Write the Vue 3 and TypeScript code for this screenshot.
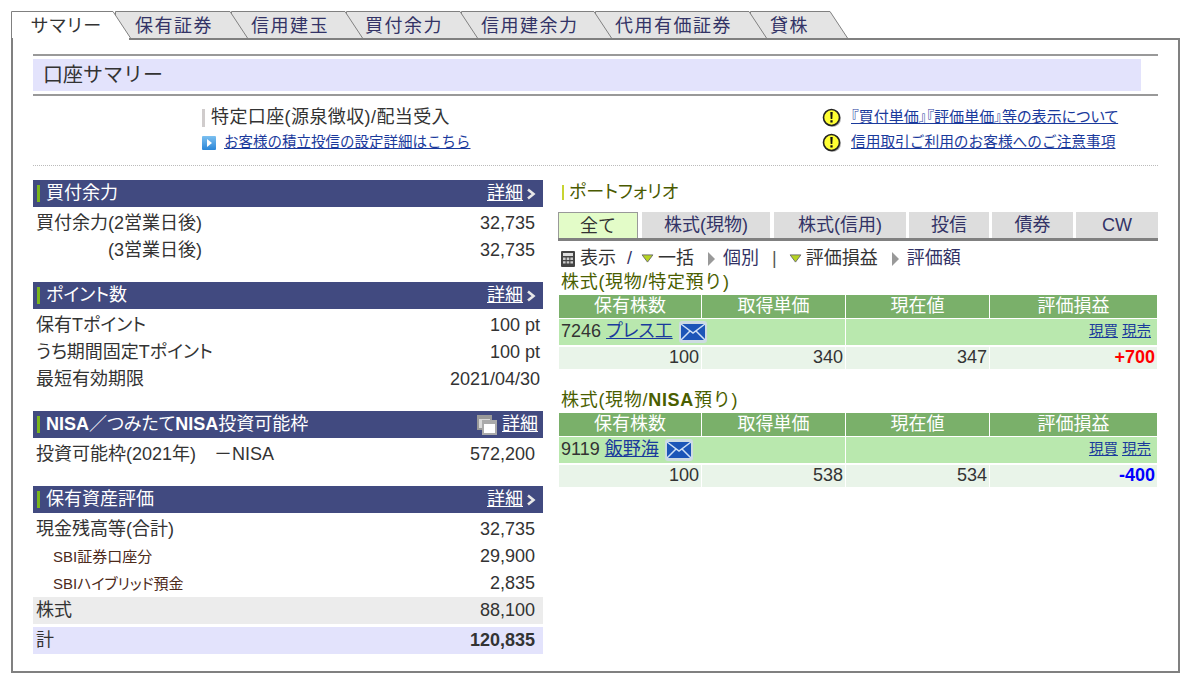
<template>
  <div class="page">
    <nav class="tabs">
      <div
        v-for="(tab, i) in tabs"
        :key="tab.label"
        class="tab"
        :class="{ active: i === 0 }"
        :style="{ width: tab.width + 'px', zIndex: i === 0 ? 20 : 10 - i }"
      >
        <svg class="tab-shape" :viewBox="`0 0 ${tab.width} 28`" preserveAspectRatio="none" aria-hidden="true">
          <path
            :d="`M0.5 28V1.5H${tab.width - 18}L${tab.width - 0.5} 28`"
            :fill="i === 0 ? '#fff' : '#e4e4e4'"
            stroke="#808080"
          />
        </svg>
        <span class="tab-label" :style="{ paddingLeft: tab.pad + 'px' }">{{ tab.label }}</span>
      </div>
    </nav>

    <main class="panel">
      <div class="title-block">
        <h1><span>口座サマリー</span></h1>
      </div>

      <section class="info">
        <div class="info-left">
          <p class="account"><i class="tick"></i>特定口座(源泉徴収)/配当受入</p>
          <p class="info-link">
            <svg class="arrow-box" viewBox="0 0 14 14" aria-hidden="true">
              <defs>
                <linearGradient id="boxFill" x1="0" y1="0" x2="0" y2="1">
                  <stop offset="0" stop-color="#7cc0f0" />
                  <stop offset="1" stop-color="#2a86d8" />
                </linearGradient>
              </defs>
              <rect width="14" height="14" rx="1" fill="url(#boxFill)" />
              <path d="M5 3l5 4-5 4z" fill="#fff" />
            </svg>
            <a href="#">お客様の積立投信の設定詳細はこちら</a>
          </p>
        </div>
        <div class="info-right">
          <p v-for="note in notes" :key="note" class="info-link">
            <svg class="warn" viewBox="0 0 20 20" aria-hidden="true">
              <circle cx="10.5" cy="10.5" r="8.5" fill="#aaa" />
              <circle cx="9.5" cy="9.5" r="8" fill="#ffff33" stroke="#222" stroke-width="1.6" />
              <path d="M8.3 4h2.4l-.4 7H8.7zM8.4 12.3h2.2v2.3H8.4z" fill="#111" />
            </svg>
            <a href="#">{{ note }}</a>
          </p>
        </div>
      </section>

      <div class="columns">
        <div class="left-col">
          <section v-for="box in boxes" :key="box.title" class="box">
            <header class="bar" :class="{ 'has-popup': box.popup }">
              <i class="bar-tick"></i>
              <span class="bar-title" v-html="box.titleHtml"></span>
              <svg v-if="box.popup" class="popup" viewBox="0 0 22 22" aria-hidden="true">
                <rect x="1" y="1" width="15" height="15" fill="#999" />
                <rect x="3" y="5" width="11" height="9" fill="#d8d8d8" />
                <rect x="6" y="6" width="15" height="15" fill="#aaa" />
                <rect x="8" y="10" width="11" height="9" fill="#fff" />
              </svg>
              <a href="#" class="detail">詳細</a>
              <svg v-if="!box.popup" class="chev" viewBox="0 0 10 12" aria-hidden="true">
                <path d="M2 1.5L7.5 6 2 10.5" fill="none" stroke="#e8e8e8" stroke-width="2.6" />
              </svg>
            </header>
            <div
              v-for="row in box.rows"
              :key="row.label"
              class="row"
              :class="row.kind"
            >
              <span class="row-label">{{ row.label }}</span>
              <span class="row-value">{{ row.value }}</span>
            </div>
          </section>
        </div>

        <div class="right-col">
          <h2 class="pf-title"><i class="pf-tick"></i>ポートフォリオ</h2>
          <div class="pf-tabs">
            <div
              v-for="(t, i) in pfTabs"
              :key="t.label"
              class="pf-tab"
              :class="{ on: i === 0 }"
              :style="{ width: t.width + 'px' }"
            >{{ t.label }}</div>
          </div>

          <div class="toolbar">
            <svg class="calc" viewBox="0 0 14 16" aria-hidden="true">
              <rect width="14" height="16" rx="1" fill="#444" />
              <rect x="2" y="2" width="10" height="3" fill="#ddd" />
              <path d="M2 6.5h2.6v2.4H2zM5.7 6.5h2.6v2.4H5.7zM9.4 6.5H12v2.4H9.4zM2 10.2h2.6v2.4H2zM5.7 10.2h2.6v2.4H5.7zM9.4 10.2H12v2.4H9.4z" fill="#ccc" />
            </svg>
            <span class="tb-show">表示</span>
            <span class="tb-slash">/</span>
            <svg class="tri" viewBox="0 0 14 10" aria-hidden="true">
              <path d="M1 1h12L7 9z" fill="#b6d422" stroke="#666" />
            </svg>
            <span class="tb-a">一括</span>
            <svg class="tri-r" viewBox="0 0 9 16" aria-hidden="true">
              <path d="M1 1l7 7-7 7z" fill="#999" />
            </svg>
            <a class="tb-b">個別</a>
            <span class="tb-sep">|</span>
            <svg class="tri" viewBox="0 0 14 10" aria-hidden="true">
              <path d="M1 1h12L7 9z" fill="#b6d422" stroke="#666" />
            </svg>
            <span class="tb-a">評価損益</span>
            <svg class="tri-r" viewBox="0 0 9 16" aria-hidden="true">
              <path d="M1 1l7 7-7 7z" fill="#999" />
            </svg>
            <a class="tb-b">評価額</a>
          </div>

          <section v-for="group in groups" :key="group.code" class="group">
            <h3 v-html="group.titleHtml"></h3>
            <table>
              <colgroup>
                <col class="c1" /><col class="c2" /><col class="c3" /><col class="c4" />
              </colgroup>
              <thead>
                <tr>
                  <th>保有株数</th><th>取得単価</th><th>現在値</th><th>評価損益</th>
                </tr>
              </thead>
              <tbody>
                <tr class="name-row">
                  <td colspan="2">
                    <span class="stock">
                      {{ group.code }} <a href="#">{{ group.name }}</a>
                      <svg class="mail" viewBox="0 0 28 22" aria-hidden="true">
                        <rect width="28" height="22" rx="3" fill="#cddbe2" />
                        <rect x="2" y="3" width="24" height="16" rx="1" fill="#1c55b8" />
                        <path d="M2 3l12 9 12-9M2 19l9-9M26 19l-9-9" fill="none" stroke="#cfe0f6" stroke-width="1.5" />
                      </svg>
                    </span>
                  </td>
                  <td colspan="2" class="trade"><a href="#">現買</a> <a href="#">現売</a></td>
                </tr>
                <tr class="num-row">
                  <td>{{ group.qty }}</td>
                  <td>{{ group.cost }}</td>
                  <td>{{ group.price }}</td>
                  <td :class="group.pnl > 0 ? 'plus' : 'minus'">{{ formatPnl(group.pnl) }}</td>
                </tr>
              </tbody>
            </table>
          </section>
        </div>
      </div>
    </main>
  </div>
</template>

<script setup lang="ts">
type Row = { label: string; value: string; kind?: string }
type Box = { title: string; titleHtml: string; popup?: boolean; rows: Row[] }

const tabs = [
  { label: 'サマリー', width: 120, pad: 20 },
  { label: '保有証券', width: 133, pad: 20 },
  { label: '信用建玉', width: 132, pad: 20 },
  { label: '買付余力', width: 132, pad: 19 },
  { label: '信用建余力', width: 151, pad: 20 },
  { label: '代用有価証券', width: 172, pad: 20 },
  { label: '貸株', width: 98, pad: 20 }
]

const notes = ['『買付単価』『評価単価』等の表示について', '信用取引ご利用のお客様へのご注意事項']

const boxes: Box[] = [
  {
    title: 'buying',
    titleHtml: '買付余力',
    rows: [
      { label: '買付余力(2営業日後)', value: '32,735' },
      { label: '(3営業日後)', value: '32,735', kind: 'shifted' }
    ]
  },
  {
    title: 'points',
    titleHtml: 'ポイント数',
    rows: [
      { label: '保有Tポイント', value: '100 pt', kind: 'wide' },
      { label: 'うち期間固定Tポイント', value: '100 pt', kind: 'wide' },
      { label: '最短有効期限', value: '2021/04/30', kind: 'wide' }
    ]
  },
  {
    title: 'nisa',
    titleHtml: '<b>NISA</b>／つみたて<b>NISA</b>投資可能枠',
    popup: true,
    rows: [{ label: '投資可能枠(2021年)　－NISA', value: '572,200' }]
  },
  {
    title: 'assets',
    titleHtml: '保有資産評価',
    rows: [
      { label: '現金残高等(合計)', value: '32,735' },
      { label: 'SBI証券口座分', value: '29,900', kind: 'sub' },
      { label: 'SBIハイブリッド預金', value: '2,835', kind: 'sub' },
      { label: '株式', value: '88,100', kind: 'grey' },
      { label: '計', value: '120,835', kind: 'total' }
    ]
  }
]

const pfTabs = [
  { label: '全て', width: 80 },
  { label: '株式(現物)', width: 128 },
  { label: '株式(信用)', width: 132 },
  { label: '投信', width: 80 },
  { label: '債券', width: 81 },
  { label: 'CW', width: 82 }
]

const groups = [
  {
    titleHtml: '株式(現物/特定預り)',
    code: '7246',
    name: 'プレス工',
    qty: 100,
    cost: 340,
    price: 347,
    pnl: 700
  },
  {
    titleHtml: '株式(現物/<b>NISA</b>預り)',
    code: '9119',
    name: '飯野海',
    qty: 100,
    cost: 538,
    price: 534,
    pnl: -400
  }
]

const formatPnl = (value: number) => (value > 0 ? `+${value}` : `${value}`)
</script>

<style>
html,
body {
  margin: 0;
  background: #fff;
}
</style>

<style scoped>
.page {
  width: 1192px;
  height: 685px;
  padding-top: 10px;
  box-sizing: border-box;
  overflow: hidden;
  font-family: 'Liberation Sans', 'Noto Sans CJK JP', sans-serif;
  font-size: 18px;
  line-height: 1.2;
  color: #333;
}

.tabs {
  display: flex;
  height: 28px;
  margin-left: 11px;
  position: relative;
  z-index: 2;
}

.tab {
  position: relative;
  height: 28px;
  margin-right: -17px;
}

.tab:nth-child(1) {
  margin-right: -16px;
}

.tab-shape {
  position: absolute;
  inset: 0;
  width: 100%;
  height: 100%;
}

/* white patch so the active tab opens into the panel */
.tab.active::after {
  content: '';
  position: absolute;
  left: 2px;
  top: 28px;
  width: 116px;
  height: 2px;
  background: #fff;
}

.tab-label {
  position: relative;
  display: block;
  line-height: 32px;
  font-size: 18px;
  letter-spacing: 1.5px;
  color: #333366;
  white-space: nowrap;
}

.tab.active .tab-label {
  color: #333;
  font-feature-settings: 'palt';
}

.panel {
  width: 1169px;
  height: 635px;
  margin-left: 11px;
  box-sizing: border-box;
  border: 2px solid #808080;
  padding: 14px 20px 0;
}

.title-block {
  border-top: 2px solid #999;
  border-bottom: 2px solid #999;
  padding: 3px 0;
  width: 1125px;
}

h1 {
  margin: 0;
  width: 1108px;
  height: 32px;
  background: #e3e3fc;
  font-size: 20px;
  font-weight: 400;
  line-height: 33px;
  color: #333;
}

h1 span {
  padding-left: 10px;
}

.info {
  display: flex;
  justify-content: space-between;
  width: 1125px;
  height: 70px;
  box-sizing: border-box;
  padding: 9px 0 0 169px;
  border-bottom: 1px dotted #bbb;
}

.info p {
  margin: 0;
}

.info-right {
  width: 336px;
}

.account {
  height: 25px;
  display: flex;
  align-items: center;
  font-size: 18px;
  letter-spacing: 0.4px;
  white-space: nowrap;
}

.tick {
  width: 3px;
  height: 18px;
  margin-right: 6px;
  background: #d0cccc;
}

.info-link {
  height: 25px;
  display: flex;
  align-items: center;
  white-space: nowrap;
  font-size: 14.5px;
}

.info-right .info-link {
  font-size: 15.1px;
}

.info-right .info-link:last-child {
  font-size: 14.7px;
}

.info a,
.stock a,
.trade a {
  color: #1a3a9c;
  text-decoration: underline;
}

.arrow-box {
  width: 14px;
  height: 14px;
  margin-right: 8px;
}

.warn {
  width: 20px;
  height: 20px;
  margin-right: 9px;
}

.info-right .info-link a {
  font-feature-settings: 'palt';
}

.info-right .info-link:last-child a {
  font-feature-settings: normal;
}

.columns {
  display: flex;
  gap: 16px;
  padding-top: 14px;
}

.left-col {
  width: 510px;
}

.box {
  margin-bottom: 18px;
}

.bar {
  display: flex;
  align-items: center;
  height: 27px;
  margin-bottom: 3px;
  background: #414a80;
  color: #fff;
  padding: 0 7px 0 4px;
  font-feature-settings: 'palt';
}

.bar.has-popup {
  padding-right: 5px;
}

.bar-tick {
  width: 3px;
  height: 17px;
  background: #7ab51d;
  margin-right: 6px;
}

.bar-title {
  flex: 1;
  white-space: nowrap;
}

.detail {
  color: #fff;
  text-decoration: underline;
}

.chev {
  width: 10px;
  height: 12px;
  margin-left: 3px;
}

.popup {
  width: 22px;
  height: 22px;
  margin-right: 4px;
}

.row {
  display: flex;
  justify-content: space-between;
  align-items: center;
  height: 27px;
  padding: 0 8px 0 3px;
  white-space: nowrap;
  font-feature-settings: 'palt';
}

.row.wide {
  padding-right: 3px;
}

.row.shifted {
  padding-left: 75px;
}

.row.sub .row-label {
  padding-left: 17px;
  font-size: 15px;
  color: #4d2a1a;
}

.row.grey {
  background: #ececec;
}

.row.total {
  background: #e3e3fc;
  margin-top: 3px;
}

.row.total .row-value {
  font-weight: 700;
}

.right-col {
  width: 599px;
}

.pf-title {
  display: flex;
  align-items: center;
  height: 25px;
  margin: 0 0 7px;
  padding-left: 3px;
  font-size: 18px;
  font-weight: 400;
  color: #4a5a00;
  font-feature-settings: 'palt';
}

.pf-tick {
  width: 2px;
  height: 15px;
  background: #c8d432;
  margin-right: 5px;
}

.pf-tabs {
  display: flex;
  gap: 3px;
  margin-left: -1px;
  height: 26px;
  border-bottom: 3px solid #808080;
}

.pf-tab {
  flex: none;
  height: 26px;
  line-height: 27px;
  box-sizing: border-box;
  text-align: center;
  background: #ddd;
  color: #333366;
}

.pf-tab:nth-child(1),
.pf-tab:nth-child(2) {
  margin-right: 1px;
}

.pf-tab.on {
  background: #e3fcc8;
  border: 1px solid #999;
  border-bottom: 0;
  color: #333;
}

.toolbar {
  display: flex;
  align-items: center;
  box-sizing: border-box;
  height: 31px;
  padding: 4px 0 0 2px;
  white-space: nowrap;
}

.calc {
  width: 14px;
  height: 16px;
  margin-right: 5px;
}

.tb-slash {
  color: #333366;
  margin: 0 9px 0 11px;
}

.tri {
  width: 13px;
  height: 9px;
  margin-right: 4px;
}

.tb-a {
  margin-right: 13px;
}

.tri-r {
  width: 9px;
  height: 16px;
  margin-right: 7px;
}

.tb-b {
  color: #333366;
}

.tb-sep {
  margin: 0 12px 0 13px;
  color: #555;
}

.group {
  margin-bottom: 21px;
}

h3 {
  margin: 0;
  height: 23px;
  line-height: 20px;
  padding-left: 2px;
  font-size: 18px;
  font-weight: 400;
  letter-spacing: 0.7px;
  color: #4a5e00;
  white-space: nowrap;
}

table {
  width: 598px;
  border-collapse: separate;
  border-spacing: 0;
  table-layout: fixed;
}

.c1 {
  width: 143px;
}

.c2,
.c3 {
  width: 144px;
}

th,
td {
  box-sizing: border-box;
}

th {
  height: 24px;
  padding: 0;
  background: #7ab06a;
  color: #fff;
  font-size: 18px;
  font-weight: 400;
  border-right: 1px solid #fff;
  border-bottom: 1px solid #fff;
}

th:last-child {
  border-right: 0;
}

.name-row td {
  height: 28px;
  padding: 0;
  background: #b9e8ae;
  border-bottom: 2px solid #fff;
  border-right: 1px solid #fff;
}

.name-row td:last-child {
  border-right: 0;
}

.stock {
  display: flex;
  align-items: center;
  padding-left: 2px;
  white-space: pre;
}

.stock a {
  font-feature-settings: 'palt';
}

.mail {
  width: 28px;
  height: 22px;
  margin-left: 6px;
}

.trade {
  text-align: right;
  padding-right: 6px !important;
  font-size: 14.5px;
}

.num-row td {
  height: 22px;
  padding: 0 2px 0 0;
  background: #e9f4e9;
  text-align: right;
  border-right: 1px solid #fff;
}

.num-row td:last-child {
  border-right: 0;
}

.plus {
  color: #f00;
  font-weight: 700;
}

.minus {
  color: #00f;
  font-weight: 700;
}
</style>
